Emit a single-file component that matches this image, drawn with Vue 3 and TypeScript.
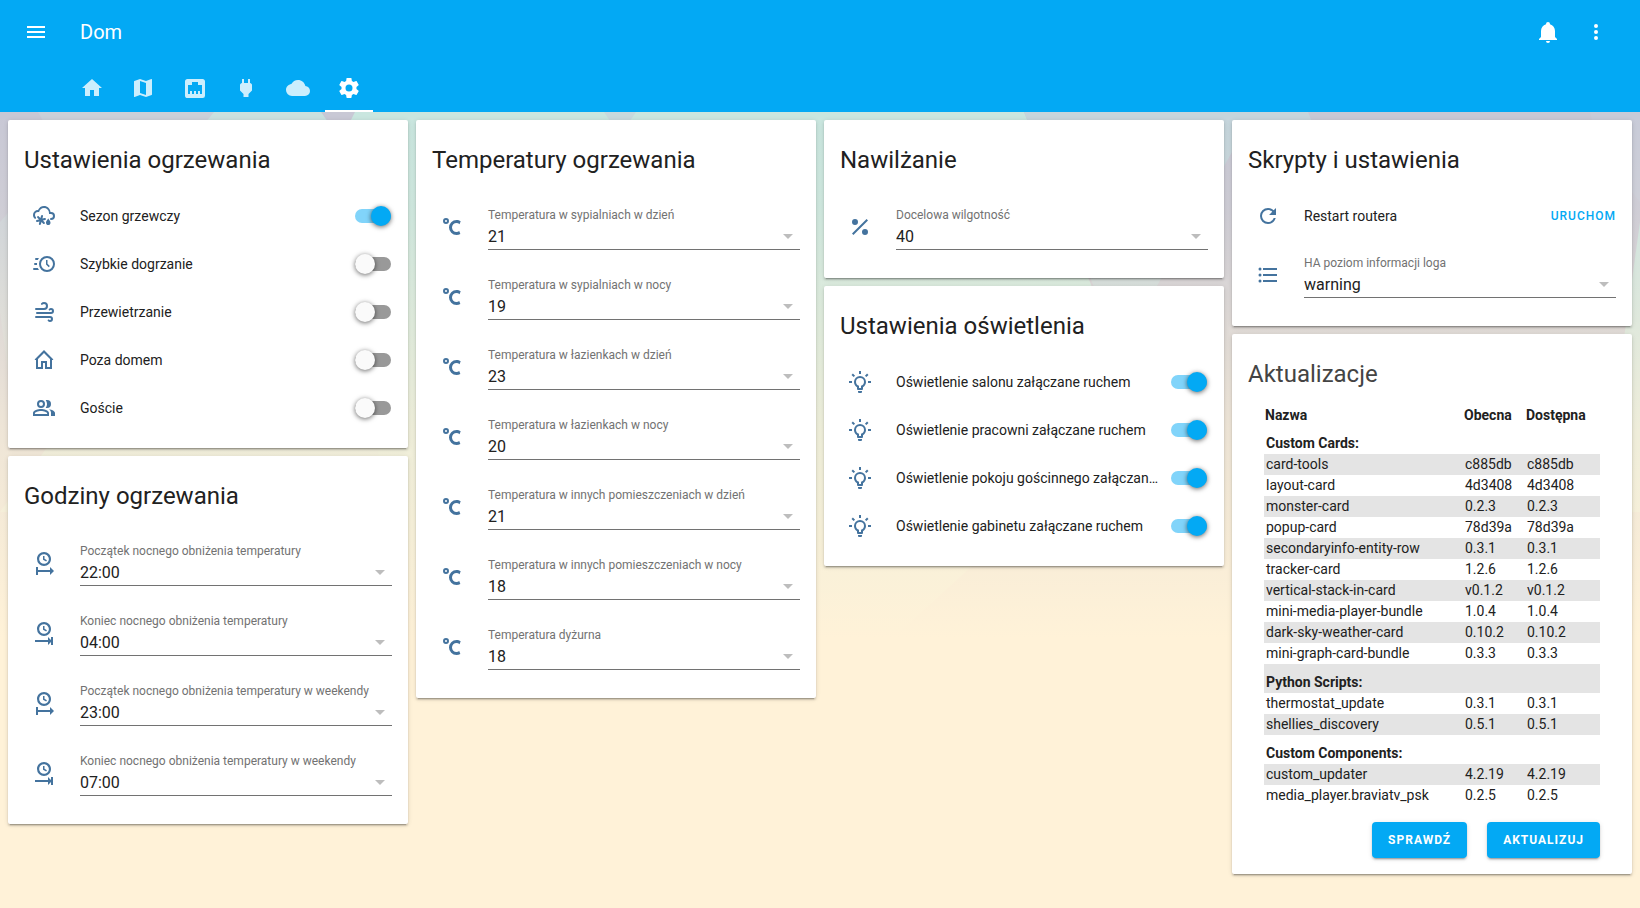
<script setup lang="ts">
import { reactive } from 'vue'

interface ToggleRow { kind: 'toggle'; id: string; icon: string; name: string; on: boolean }
interface SelectRow { kind: 'select'; id: string; icon: string; name: string; value: string; options: string[] }
interface ScriptRow { kind: 'script'; id: string; icon: string; name: string; action: string }
type Row = ToggleRow | SelectRow | ScriptRow
interface Card { title: string; rows: Row[] }
interface Tab { icon: string; label: string; active?: boolean }
interface UpdateItem { name: string; current?: string; available?: string }

const clockFace = 'M12,1C8.14,1 5,4.14 5,8A7,7 0 0,0 12,15C15.86,15 19,11.87 19,8C19,4.14 15.86,1 12,1M12,3.15C14.67,3.15 16.85,5.32 16.85,8C16.85,10.68 14.67,12.85 12,12.85A4.85,4.85 0 0,1 7.15,8A4.85,4.85 0 0,1 12,3.15M11,5V8.69L14.19,10.53L14.94,9.23L12.5,7.82V5Z'

const icons: Record<string, string> = {
  menu: 'M3,6H21V8H3V6M3,11H21V13H3V11M3,16H21V18H3V16Z',
  bell: 'M21,19V20H3V19L5,17V11C5,7.9 7.03,5.17 10,4.29C10,4.19 10,4.1 10,4A2,2 0 0,1 12,2A2,2 0 0,1 14,4C14,4.1 14,4.19 14,4.29C16.97,5.17 19,7.9 19,11V17L21,19M14,21A2,2 0 0,1 12,23A2,2 0 0,1 10,21Z',
  dots: 'M12,16A2,2 0 0,1 14,18A2,2 0 0,1 12,20A2,2 0 0,1 10,18A2,2 0 0,1 12,16M12,10A2,2 0 0,1 14,12A2,2 0 0,1 12,14A2,2 0 0,1 10,12A2,2 0 0,1 12,10M12,4A2,2 0 0,1 14,6A2,2 0 0,1 12,8A2,2 0 0,1 10,6A2,2 0 0,1 12,4Z',
  home: 'M10,20V14H14V20H19V12H22L12,3L2,12H5V20H10Z',
  map: 'M15,19L9,16.89V5L15,7.11M20.5,3C20.44,3 20.39,3 20.34,3L15,5.1L9,3L3.36,4.9C3.15,4.97 3,5.15 3,5.38V20.5A0.5,0.5 0 0,0 3.5,21C3.55,21 3.61,21 3.66,20.97L9,18.9L15,21L20.64,19.1C20.85,19 21,18.85 21,18.62V3.5A0.5,0.5 0 0,0 20.5,3Z',
  ethernet: 'M7,15H9V18H11V15H13V18H15V15H17V18H19V9H15V6H9V9H5V18H7V15M4.38,3H19.63C20.94,3 22,4.06 22,5.38V19.63A2.37,2.37 0 0,1 19.63,22H4.38C3.06,22 2,20.94 2,19.63V5.38C2,4.06 3.06,3 4.38,3Z',
  plug: 'M16,7V3H14V7H10V3H8V7H8C7,7 6,8 6,9V14.5L9.5,18V21H14.5V18L18,14.5V9C18,8 17,7 16,7Z',
  cloud: 'M19.35,10.03C18.67,6.59 15.64,4 12,4C9.11,4 6.6,5.64 5.35,8.03C2.34,8.36 0,10.9 0,14A6,6 0 0,0 6,20H19A5,5 0 0,0 24,15C24,12.36 21.95,10.22 19.35,10.03Z',
  settings: 'M12,15.5A3.5,3.5 0 0,1 8.5,12A3.5,3.5 0 0,1 12,8.5A3.5,3.5 0 0,1 15.5,12A3.5,3.5 0 0,1 12,15.5M19.43,12.97C19.47,12.65 19.5,12.33 19.5,12C19.5,11.67 19.47,11.34 19.43,11L21.54,9.37C21.73,9.22 21.78,8.95 21.66,8.73L19.66,5.27C19.54,5.05 19.27,4.96 19.05,5.05L16.56,6.05C16.04,5.66 15.5,5.32 14.87,5.07L14.5,2.42C14.46,2.18 14.25,2 14,2H10C9.75,2 9.54,2.18 9.5,2.42L9.13,5.07C8.5,5.32 7.96,5.66 7.44,6.05L4.95,5.05C4.73,4.96 4.46,5.05 4.34,5.27L2.34,8.73C2.21,8.95 2.27,9.22 2.46,9.37L4.57,11C4.53,11.34 4.5,11.67 4.5,12C4.5,12.33 4.53,12.65 4.57,12.97L2.46,14.63C2.27,14.78 2.21,15.05 2.34,15.27L4.34,18.73C4.46,18.95 4.73,19.03 4.95,18.95L7.44,17.94C7.96,18.34 8.5,18.68 9.13,18.93L9.5,21.58C9.54,21.82 9.75,22 10,22H14C14.25,22 14.46,21.82 14.5,21.58L14.87,18.93C15.5,18.67 16.04,18.34 16.56,17.94L19.05,18.95C19.27,19.03 19.54,18.95 19.66,18.73L21.66,15.27C21.78,15.05 21.73,14.78 21.54,14.63L19.43,12.97Z',
  snowyRainy: 'M18.5,18.67C18.5,19.96 17.5,21 16.25,21C15,21 14,19.96 14,18.67C14,17.12 16.25,14.5 16.25,14.5C16.25,14.5 18.5,17.12 18.5,18.67M4,17.36C3.86,16.82 4.18,16.25 4.73,16.11L7,15.5L5.33,13.86C4.93,13.46 4.93,12.81 5.33,12.4C5.73,12 6.4,12 6.79,12.4L8.45,14.05L9.04,11.8C9.18,11.24 9.75,10.92 10.29,11.07C10.85,11.21 11.17,11.78 11,12.33L10.42,14.58L12.67,14C13.22,13.83 13.79,14.15 13.93,14.71C14.08,15.25 13.76,15.82 13.2,15.96L10.95,16.55L12.6,18.21C13,18.6 13,19.27 12.6,19.67C12.2,20.07 11.54,20.07 11.15,19.67L9.5,18L8.89,20.27C8.75,20.83 8.18,21.14 7.64,21C7.08,20.86 6.77,20.29 6.91,19.74L7.5,17.5L5.26,18.09C4.71,18.23 4.14,17.92 4,17.36M1,11A5,5 0 0,1 6,6C7,3.65 9.3,2 12,2C15.43,2 18.24,4.66 18.5,8.03L19,8A4,4 0 0,1 23,12A4,4 0 0,1 19,16A1,1 0 0,1 18,15A1,1 0 0,1 19,14A2,2 0 0,0 21,12A2,2 0 0,0 19,10H17V9A5,5 0 0,0 12,4C9.5,4 7.45,5.82 7.06,8.19C6.73,8.07 6.37,8 6,8A3,3 0 0,0 3,11C3,11.85 3.35,12.61 3.91,13.16C4.27,13.55 4.26,14.16 3.88,14.54C3.5,14.93 2.85,14.93 2.47,14.54C1.56,13.63 1,12.38 1,11Z',
  clockFast: 'M15,4A8,8 0 0,1 23,12A8,8 0 0,1 15,20A8,8 0 0,1 7,12A8,8 0 0,1 15,4M15,6A6,6 0 0,0 9,12A6,6 0 0,0 15,18A6,6 0 0,0 21,12A6,6 0 0,0 15,6M14,8H15.5V11.78L17.83,14.11L16.77,15.17L14,12.4V8M2,18A1,1 0 0,1 1,17A1,1 0 0,1 2,16H5.83C6.14,16.71 6.54,17.38 7,18H2M3,13A1,1 0 0,1 2,12A1,1 0 0,1 3,11H5.05L5,12L5.05,13H3M4,8A1,1 0 0,1 3,7A1,1 0 0,1 4,6H7C6.54,6.62 6.14,7.29 5.83,8H4Z',
  windy: 'M4,10A1,1 0 0,1 3,9A1,1 0 0,1 4,8H12A2,2 0 0,0 14,6A2,2 0 0,0 12,4C11.45,4 10.95,4.22 10.59,4.59C10.2,5 9.56,5 9.17,4.59C8.78,4.2 8.78,3.56 9.17,3.17C9.9,2.45 10.9,2 12,2A4,4 0 0,1 16,6A4,4 0 0,1 12,10H4M19,12A1,1 0 0,0 20,11A1,1 0 0,0 19,10C18.72,10 18.47,10.11 18.29,10.29C17.9,10.68 17.27,10.68 16.88,10.29C16.5,9.9 16.5,9.27 16.88,8.88C17.42,8.34 18.17,8 19,8A3,3 0 0,1 22,11A3,3 0 0,1 19,14H5A1,1 0 0,1 4,13A1,1 0 0,1 5,12H19M18,18H4A1,1 0 0,1 3,17A1,1 0 0,1 4,16H18A3,3 0 0,1 21,19A3,3 0 0,1 18,22C17.17,22 16.42,21.66 15.88,21.12C15.5,20.73 15.5,20.1 15.88,19.71C16.27,19.32 16.9,19.32 17.29,19.71C17.47,19.89 17.72,20 18,20A1,1 0 0,0 19,19A1,1 0 0,0 18,18Z',
  homeOutline: 'M9,19V13H15V19H18V10.91L12,4.91L6,10.91V19H9M21.41,11.41L20.7,12H20V21H13V15H11V21H4V12H3.3L2.59,11.41L12,2L21.41,11.41Z',
  people: 'M9,4A4,4 0 0,1 13,8A4,4 0 0,1 9,12A4,4 0 0,1 5,8A4,4 0 0,1 9,4M9,6A2,2 0 0,0 7,8A2,2 0 0,0 9,10A2,2 0 0,0 11,8A2,2 0 0,0 9,6M9,13C11.67,13 17,14.34 17,17V20H1V17C1,14.34 6.33,13 9,13M9,14.9C6.03,14.9 2.9,16.36 2.9,17V18.1H15.1V17C15.1,16.36 11.97,14.9 9,14.9M15,4A4,4 0 0,1 19,8A4,4 0 0,1 15,12C14.53,12 14.08,11.92 13.67,11.77C14.5,10.74 15,9.43 15,8C15,6.57 14.5,5.26 13.67,4.23C14.08,4.08 14.53,4 15,4M23,17V20H19V16.5C19,15.25 18.24,14.1 16.97,13.18C19.68,13.62 23,14.9 23,17Z',
  clockStart: clockFace + 'M4,16V24H6V21H18V24L22,20L18,16V19H6V16Z',
  clockEnd: clockFace + 'M19,16V19L16,16V19H3V21H16V24L19,21V24H21V16Z',
  celsius: 'M16.5,5C18.05,5 19.5,5.47 20.69,6.28L19.53,9.17C18.73,8.44 17.67,8 16.5,8C14,8 12,10 12,12.5C12,15 14,17 16.5,17C17.53,17 18.47,16.66 19.23,16.08L20.37,18.93C19.24,19.61 17.92,20 16.5,20A7.5,7.5 0 0,1 9,12.5A7.5,7.5 0 0,1 16.5,5M6,3A3,3 0 0,1 9,6A3,3 0 0,1 6,9A3,3 0 0,1 3,6A3,3 0 0,1 6,3M6,5A1,1 0 0,0 5,6A1,1 0 0,0 6,7A1,1 0 0,0 7,6A1,1 0 0,0 6,5Z',
  percent: 'M7,4A3,3 0 0,1 10,7A3,3 0 0,1 7,10A3,3 0 0,1 4,7A3,3 0 0,1 7,4M17,14A3,3 0 0,1 20,17A3,3 0 0,1 17,20A3,3 0 0,1 14,17A3,3 0 0,1 17,14M20,5.41L5.41,20L4,18.59L18.59,4L20,5.41Z',
  bulb: 'M20,11H23V13H20V11M1,11H4V13H1V11M13,1V4H11V1H13M4.92,3.5L7.05,5.64L5.63,7.05L3.5,4.93L4.92,3.5M16.95,5.63L19.07,3.5L20.5,4.93L18.37,7.05L16.95,5.63M12,6A6,6 0 0,1 18,12C18,14.22 16.79,16.16 15,17.2V19A1,1 0 0,1 14,20H10A1,1 0 0,1 9,19V17.2C7.21,16.16 6,14.22 6,12A6,6 0 0,1 12,6M14,21V22A1,1 0 0,1 13,23H11A1,1 0 0,1 10,22V21H14M11,18H13V15.87C14.73,15.43 16,13.86 16,12A4,4 0 0,0 12,8A4,4 0 0,0 8,12C8,13.86 9.27,15.43 11,15.87V18Z',
  refresh: 'M17.65,6.35C16.2,4.9 14.21,4 12,4A8,8 0 0,0 4,12A8,8 0 0,0 12,20C15.73,20 18.84,17.45 19.73,14H17.65C16.83,16.33 14.61,18 12,18A6,6 0 0,1 6,12A6,6 0 0,1 12,6C13.66,6 15.14,6.69 16.22,7.78L13,11H20V4L17.65,6.35Z',
  list: 'M7,5H21V7H7V5M7,13V11H21V13H7M4,4.5A1.5,1.5 0 0,1 5.5,6A1.5,1.5 0 0,1 4,7.5A1.5,1.5 0 0,1 2.5,6A1.5,1.5 0 0,1 4,4.5M4,10.5A1.5,1.5 0 0,1 5.5,12A1.5,1.5 0 0,1 4,13.5A1.5,1.5 0 0,1 2.5,12A1.5,1.5 0 0,1 4,10.5M7,19V17H21V19H7M4,16.5A1.5,1.5 0 0,1 5.5,18A1.5,1.5 0 0,1 4,19.5A1.5,1.5 0 0,1 2.5,18A1.5,1.5 0 0,1 4,16.5Z',
}

const tabs: Tab[] = [
  { icon: 'home', label: 'Dom' },
  { icon: 'map', label: 'Mapa' },
  { icon: 'ethernet', label: 'Sieć' },
  { icon: 'plug', label: 'Energia' },
  { icon: 'cloud', label: 'Pogoda' },
  { icon: 'settings', label: 'Ustawienia', active: true },
]

const hours = Array.from({ length: 24 }, (_, h) => `${String(h).padStart(2, '0')}:00`)
const degrees = Array.from({ length: 14 }, (_, i) => String(i + 12))

let counter = 0
const nextId = () => `row-${++counter}`
const toggle = (icon: string, name: string, on: boolean): ToggleRow => ({ kind: 'toggle', id: nextId(), icon, name, on })
const select = (icon: string, name: string, value: string, options: string[]): SelectRow => ({ kind: 'select', id: nextId(), icon, name, value, options })

const columns = reactive<Card[][]>([
  [
    {
      title: 'Ustawienia ogrzewania',
      rows: [
        toggle('snowyRainy', 'Sezon grzewczy', true),
        toggle('clockFast', 'Szybkie dogrzanie', false),
        toggle('windy', 'Przewietrzanie', false),
        toggle('homeOutline', 'Poza domem', false),
        toggle('people', 'Goście', false),
      ],
    },
    {
      title: 'Godziny ogrzewania',
      rows: [
        select('clockStart', 'Początek nocnego obniżenia temperatury', '22:00', hours),
        select('clockEnd', 'Koniec nocnego obniżenia temperatury', '04:00', hours),
        select('clockStart', 'Początek nocnego obniżenia temperatury w weekendy', '23:00', hours),
        select('clockEnd', 'Koniec nocnego obniżenia temperatury w weekendy', '07:00', hours),
      ],
    },
  ],
  [
    {
      title: 'Temperatury ogrzewania',
      rows: [
        select('celsius', 'Temperatura w sypialniach w dzień', '21', degrees),
        select('celsius', 'Temperatura w sypialniach w nocy', '19', degrees),
        select('celsius', 'Temperatura w łazienkach w dzień', '23', degrees),
        select('celsius', 'Temperatura w łazienkach w nocy', '20', degrees),
        select('celsius', 'Temperatura w innych pomieszczeniach w dzień', '21', degrees),
        select('celsius', 'Temperatura w innych pomieszczeniach w nocy', '18', degrees),
        select('celsius', 'Temperatura dyżurna', '18', degrees),
      ],
    },
  ],
  [
    { title: 'Nawilżanie', rows: [select('percent', 'Docelowa wilgotność', '40', ['30', '35', '40', '45', '50', '55', '60'])] },
    {
      title: 'Ustawienia oświetlenia',
      rows: [
        toggle('bulb', 'Oświetlenie salonu załączane ruchem', true),
        toggle('bulb', 'Oświetlenie pracowni załączane ruchem', true),
        toggle('bulb', 'Oświetlenie pokoju gościnnego załączane ruchem', true),
        toggle('bulb', 'Oświetlenie gabinetu załączane ruchem', true),
      ],
    },
  ],
  [
    {
      title: 'Skrypty i ustawienia',
      rows: [
        { kind: 'script', id: nextId(), icon: 'refresh', name: 'Restart routera', action: 'Uruchom' },
        select('list', 'HA poziom informacji loga', 'warning', ['critical', 'error', 'warning', 'info', 'debug']),
      ],
    },
  ],
])

const item = (name: string, current: string): UpdateItem => ({ name, current, available: current })
const updates: UpdateItem[] = [
  { name: 'Custom Cards:' },
  item('card-tools', 'c885db'),
  item('layout-card', '4d3408'),
  item('monster-card', '0.2.3'),
  item('popup-card', '78d39a'),
  item('secondaryinfo-entity-row', '0.3.1'),
  item('tracker-card', '1.2.6'),
  item('vertical-stack-in-card', 'v0.1.2'),
  item('mini-media-player-bundle', '1.0.4'),
  item('dark-sky-weather-card', '0.10.2'),
  item('mini-graph-card-bundle', '0.3.3'),
  { name: 'Python Scripts:' },
  item('thermostat_update', '0.3.1'),
  item('shellies_discovery', '0.5.1'),
  { name: 'Custom Components:' },
  item('custom_updater', '4.2.19'),
  item('media_player.braviatv_psk', '0.2.5'),
]
</script>

<template>
  <div class="page">
    <svg class="backdrop" viewBox="0 0 1640 796" preserveAspectRatio="none" aria-hidden="true">
      <defs>
        <linearGradient id="fade" x1="0" y1="0" x2="0" y2="1">
          <stop offset="0" stop-color="#fff2d8" stop-opacity="0" />
          <stop offset="0.12" stop-color="#fff2d8" stop-opacity="0.12" />
          <stop offset="0.4" stop-color="#fff2d8" stop-opacity="0.7" />
          <stop offset="0.66" stop-color="#fff2d8" stop-opacity="1" />
        </linearGradient>
      </defs>
      <rect width="1640" height="796" fill="#c8c8d5" />
      <path d="M38 0H226L190 60L8 260L0 200V110L60 40Z" fill="#c9d0d9" />
      <path d="M214 0H321L328 10L420 400H0L160 180L206 10Z" fill="#c9e1df" />
      <path d="M355 0H1024L1036 30L1140 300L900 520H400L340 30Z" fill="#c9e6df" />
      <path d="M604 0H636L628 12H612Z" fill="#c7d9dd" />
      <path d="M1024 0H1308L1320 30L1232 110V40L1120 240L1036 30Z" fill="#c5d5dc" />
      <path d="M1486 0H1590L1600 40L1640 90V0Z" fill="#c8cbd8" />
      <path d="M1640 110L1600 400H1700V100Z" fill="#c9e1df" />
      <rect width="1640" height="796" fill="url(#fade)" />
    </svg>

    <header class="header">
      <div class="toolbar">
        <button class="icon-button" type="button" aria-label="Menu">
          <svg class="icon" viewBox="0 0 24 24"><path :d="icons.menu" /></svg>
        </button>
        <h1 class="page-title">Dom</h1>
        <button class="icon-button" type="button" aria-label="Powiadomienia">
          <svg class="icon" viewBox="0 0 24 24"><path :d="icons.bell" /></svg>
        </button>
        <button class="icon-button" type="button" aria-label="Więcej">
          <svg class="icon" viewBox="0 0 24 24"><path :d="icons.dots" /></svg>
        </button>
      </div>
      <nav class="tabs">
        <a v-for="tab in tabs" :key="tab.icon" href="#" class="tab" :class="{ active: tab.active }" :aria-label="tab.label">
          <svg class="icon" viewBox="0 0 24 24"><path fill-rule="evenodd" :d="icons[tab.icon]" /></svg>
        </a>
      </nav>
    </header>

    <main class="columns">
      <div v-for="(cards, index) in columns" :key="index" class="column">
        <section v-for="card in cards" :key="card.title" class="card">
          <h2 class="card-title">{{ card.title }}</h2>
          <div class="rows">
            <div v-for="row in card.rows" :key="row.id" class="row">
              <span class="row-icon">
                <svg class="icon" viewBox="0 0 24 24"><path fill-rule="evenodd" :d="icons[row.icon]" /></svg>
              </span>
              <template v-if="row.kind === 'toggle'">
                <label class="row-name" :for="row.id">{{ row.name }}</label>
                <input :id="row.id" v-model="row.on" class="switch" type="checkbox" role="switch" />
              </template>
              <template v-else-if="row.kind === 'script'">
                <span class="row-name">{{ row.name }}</span>
                <button class="text-button" type="button">{{ row.action }}</button>
              </template>
              <div v-else class="field">
                <label class="field-label" :for="row.id">{{ row.name }}</label>
                <div class="field-box">
                  <select :id="row.id" v-model="row.value" class="field-select">
                    <option v-for="option in row.options" :key="option" :value="option">{{ option }}</option>
                  </select>
                  <svg class="caret" viewBox="0 0 24 24" aria-hidden="true"><path d="M7 10l5 5 5-5z" /></svg>
                </div>
              </div>
            </div>
          </div>
        </section>

        <section v-if="index === columns.length - 1" class="card updates">
          <h2 class="card-title muted">Aktualizacje</h2>
          <table class="update-table">
            <thead>
              <tr>
                <th class="name-column" scope="col">Nazwa</th>
                <th class="current-column" scope="col">Obecna</th>
                <th scope="col">Dostępna</th>
              </tr>
            </thead>
            <tbody>
              <tr v-for="entry in updates" :key="entry.name" :class="{ group: !entry.current }">
                <td>{{ entry.name }}</td>
                <td>{{ entry.current }}</td>
                <td>{{ entry.available }}</td>
              </tr>
            </tbody>
          </table>
          <div class="actions">
            <button class="raised-button" type="button">Sprawdź</button>
            <button class="raised-button" type="button">Aktualizuj</button>
          </div>
        </section>
      </div>
    </main>
  </div>
</template>

<style>
body {
  background: #fff2d8;
}
</style>

<style scoped>
.page {
  position: relative;
  display: flex;
  flex-direction: column;
  min-height: 100vh;
  font-family: Roboto, 'Noto Sans', sans-serif;
  font-size: 14px;
  line-height: 20px;
  color: #212121;
  background: #fff2d8;
}

.backdrop {
  position: absolute;
  inset: 112px 0 0;
  width: 100%;
  height: calc(100% - 112px);
}

.icon {
  display: block;
  width: 24px;
  height: 24px;
  fill: currentColor;
}

.header {
  position: relative;
  height: 112px;
  color: #fff;
  background: #03a9f4;
}

.toolbar {
  display: flex;
  align-items: center;
  gap: 8px;
  height: 64px;
  padding: 0 24px 0 16px;
}

.icon-button {
  padding: 8px;
  border: 0;
  color: inherit;
  background: none;
}

.page-title {
  flex: 1;
  margin: 0 0 0 16px;
  font-size: 20px;
  font-weight: 400;
  line-height: 32px;
}

.tabs {
  display: flex;
  justify-content: space-between;
  width: 305px;
  margin-left: 68px;
}

.tab {
  padding: 12px 12px 10px;
  border-bottom: 2px solid transparent;
  color: rgba(255, 255, 255, 0.8);
}

.tab.active {
  color: #fff;
  border-bottom-color: #fff;
}

.columns {
  position: relative;
  display: grid;
  grid-template-columns: repeat(4, minmax(0, 1fr));
  align-items: start;
  gap: 8px;
  padding: 8px;
}

.column {
  display: flex;
  flex-direction: column;
  gap: 8px;
}

.card {
  padding: 20px 16px;
  border-radius: 2px;
  background: #fff;
  box-shadow: 0 2px 2px 0 rgba(0, 0, 0, 0.14), 0 1px 5px 0 rgba(0, 0, 0, 0.12), 0 3px 1px -2px rgba(0, 0, 0, 0.2);
}

.card-title {
  margin: 0 0 16px;
  font-size: 24px;
  font-weight: 400;
  line-height: 40px;
}

.card-title.muted {
  margin-bottom: 12px;
  color: #444;
}

.rows {
  display: flex;
  flex-direction: column;
  gap: 8px;
}

.row {
  display: flex;
  align-items: center;
  min-height: 40px;
}

.row-icon {
  flex: none;
  padding: 8px;
  color: #44739e;
}

.row-name {
  flex: 1;
  min-width: 0;
  margin: 0 8px 0 16px;
  overflow: hidden;
  text-overflow: ellipsis;
  white-space: nowrap;
}

.switch {
  position: relative;
  flex: none;
  width: 36px;
  height: 14px;
  margin: 0 1px 0 0;
  border-radius: 7px;
  appearance: none;
  background: #999;
}

.switch::before {
  content: '';
  position: absolute;
  top: -3px;
  left: 0;
  width: 20px;
  height: 20px;
  border-radius: 50%;
  background: #fafafa;
  box-shadow: 0 1px 5px 0 rgba(0, 0, 0, 0.6);
}

.switch:checked {
  background: #81d4fa;
}

.switch:checked::before {
  left: 16px;
  background: #03a9f4;
}

.text-button {
  padding: 0;
  border: 0;
  font: 500 12px/20px Roboto, 'Noto Sans', sans-serif;
  letter-spacing: 1px;
  text-transform: uppercase;
  color: #03a9f4;
  background: none;
}

.field {
  flex: 1;
  min-width: 0;
  margin-left: 16px;
  padding: 9px 0 8px;
}

.field-label {
  display: block;
  font-size: 12px;
  line-height: 20px;
  color: #727272;
  white-space: nowrap;
}

.field-box {
  position: relative;
  border-bottom: 1px solid #727272;
}

.field-select {
  display: block;
  width: 100%;
  height: 24px;
  padding: 0;
  border: 0;
  appearance: none;
  font: 400 16px/24px Roboto, 'Noto Sans', sans-serif;
  color: #212121;
  background: none;
}

.caret {
  position: absolute;
  top: -1px;
  right: 0;
  width: 24px;
  height: 24px;
  fill: #bdbdbd;
  pointer-events: none;
}

.updates {
  padding-bottom: 16px;
}

.update-table {
  width: calc(100% - 32px);
  margin: 0 16px;
  border-collapse: collapse;
  table-layout: fixed;
}

.update-table th {
  padding: 0 1px;
  font-weight: 700;
  text-align: left;
  line-height: 19px;
}

.update-table td {
  padding: 0 2px;
  line-height: 21px;
}

.name-column {
  width: 197px;
}

.current-column {
  width: 60px;
}

.update-table tbody tr:nth-child(even) {
  background: #e4e4e4;
}

.update-table .group td {
  padding-top: 8px;
  font-weight: 700;
}

.actions {
  display: flex;
  justify-content: flex-end;
  gap: 20px;
  margin: 16px 16px 0;
}

.raised-button {
  height: 36px;
  padding: 0 16px;
  border: 0;
  border-radius: 4px;
  font: 700 12px/36px Roboto, 'Noto Sans', sans-serif;
  letter-spacing: 1px;
  text-transform: uppercase;
  color: #fff;
  background: #03a9f4;
  box-shadow: 0 2px 2px 0 rgba(0, 0, 0, 0.14), 0 1px 5px 0 rgba(0, 0, 0, 0.12), 0 3px 1px -2px rgba(0, 0, 0, 0.2);
}
</style>
